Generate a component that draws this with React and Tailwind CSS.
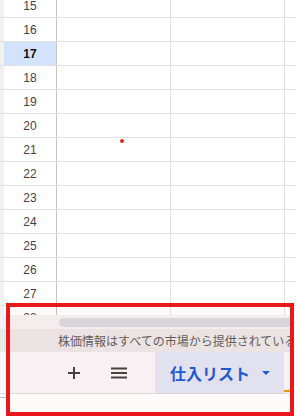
import React from 'react';

const rows = [15, 16, 17, 18, 19, 20, 21, 22, 23, 24, 25, 26, 27, 28];

// Row of the sheet grid: gutter, row number, two columns and a sliver of the third
const Row = ({ n }) => {
  const active = n === 17;
  return (
    <div className="flex h-[24px] border-b border-[#e1e1e1]">
      <div className="w-[4px] bg-[#f1f1f1]" />
      <div
        className={
          'w-[53px] border-r border-[#c4c4c4] flex items-center justify-center text-[12px] ' +
          (active ? 'bg-[#d3e3fd] font-bold text-[#111]' : 'text-[#444]')
        }
      >
        {n}
      </div>
      <div className="w-[114px] border-r border-[#e1e1e1]" />
      <div className="w-[114px] border-r border-[#e1e1e1]" />
      <div className="flex-1" />
    </div>
  );
};

const App = () => {
  return (
    <div className="relative w-[296px] h-[420px] overflow-hidden bg-white font-['Liberation_Sans','Noto_Sans_CJK_JP',sans-serif]">
      {/* Grid */}
      <div className="h-[315px] overflow-hidden">
        <div className="-mt-[6px]">
          {rows.map((n) => (
            <Row key={n} n={n} />
          ))}
        </div>
      </div>

      {/* Bottom panel */}
      <div className="w-[292px]">
        {/* Horizontal scrollbar */}
        <div className="h-[14px] bg-[#f4f2f2] flex items-center pl-[59px]">
          <div className="h-[9px] flex-1 rounded-l-full bg-[#dadade]" />
        </div>

        {/* Info bar */}
        <div className="h-[23px] bg-[#ebe8e8] pl-[58px] flex items-center whitespace-nowrap overflow-hidden text-[12px] text-[#5f5f5f] font-['Noto_Sans_CJK_JP',sans-serif]">
          株価情報はすべての市場から提供されているわけではありません
        </div>

        {/* Sheet tabs */}
        <div className="h-[42px] bg-[#f8f6f8] flex border-b border-[#dcdcdc]">
          <div className="w-[155px] flex items-center">
            <svg className="ml-[68px]" width="12" height="12" viewBox="0 0 12 12">
              <path d="M6 0v12M0 6h12" stroke="#444" strokeWidth="2" />
            </svg>
            <svg className="ml-[31px]" width="16" height="12" viewBox="0 0 16 12">
              <path d="M0 1.5h16M0 6h16M0 10.5h16" stroke="#444" strokeWidth="1.8" />
            </svg>
          </div>
          <div className="w-[129px] bg-[#e1e6f5] flex items-center pl-[15px] pr-[14px]">
            <span className="text-[16px] font-bold text-[#1a5bd6] font-['Noto_Sans_CJK_JP',sans-serif] leading-none">
              仕入リスト
            </span>
            <svg className="ml-auto" width="8" height="4" viewBox="0 0 8 4">
              <path d="M0 0h8L4 4z" fill="#1a5bd6" />
            </svg>
          </div>
          <div className="flex-1 flex flex-col justify-end pb-[1px]">
            <div className="w-[6px] h-[2px] bg-[#f29900]" />
          </div>
        </div>
      </div>
      <div className="h-[3px]" />
      <div className="h-[1px] w-[8px] bg-[#b7c0cc]" />

      {/* Red dot in the grid */}
      <div className="absolute left-[120px] top-[139px] w-[4px] h-[4px] rounded-full bg-[#e02424]" />

      {/* Annotation box */}
      <div className="absolute left-[6px] top-[303px] w-[288px] h-[113px] border-4 border-[#e8191d] bg-[rgba(255,0,0,0.02)]" />
    </div>
  );
};

export default App;
